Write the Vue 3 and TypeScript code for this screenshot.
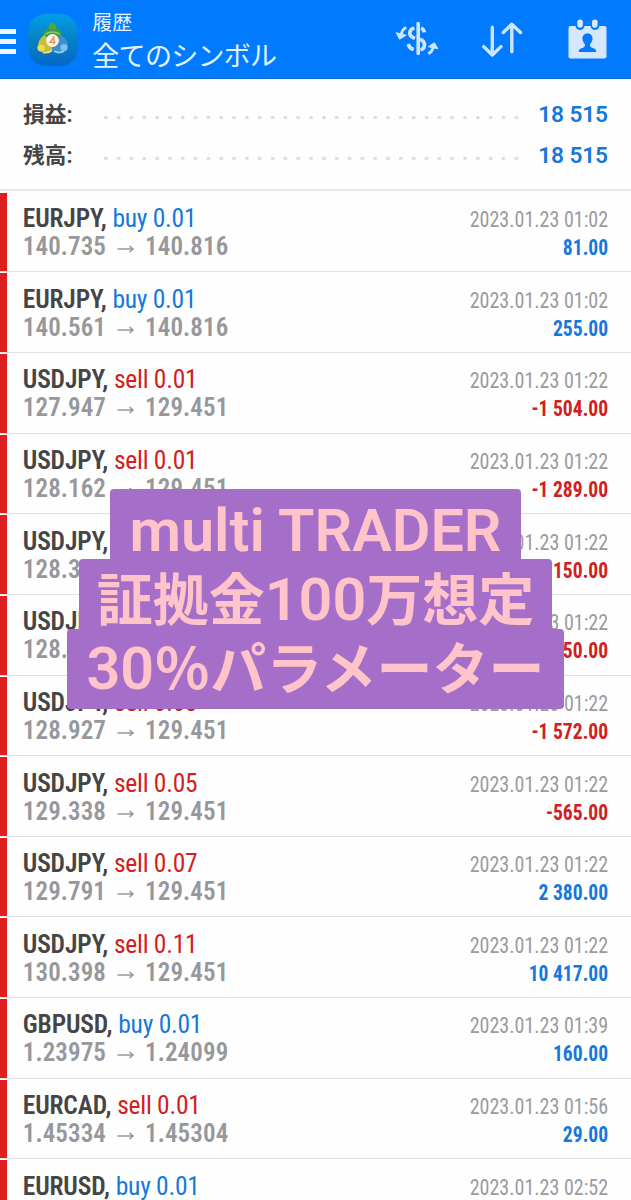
<script setup lang="ts">
interface Deal {
  symbol: string
  side: 'buy' | 'sell'
  volume: string
  open: string
  close: string
  time: string
  profit: string
}

const deal = (
  symbol: string, side: 'buy' | 'sell', volume: string,
  open: string, close: string, time: string, profit: string,
): Deal => ({ symbol, side, volume, open, close, time, profit })

const deals: Deal[] = [
  deal('EURJPY', 'buy', '0.01', '140.735', '140.816', '01:02', '81.00'),
  deal('EURJPY', 'buy', '0.01', '140.561', '140.816', '01:02', '255.00'),
  deal('USDJPY', 'sell', '0.01', '127.947', '129.451', '01:22', '-1 504.00'),
  deal('USDJPY', 'sell', '0.01', '128.162', '129.451', '01:22', '-1 289.00'),
  deal('USDJPY', 'sell', '0.01', '128.301', '129.451', '01:22', '-1 150.00'),
  deal('USDJPY', 'sell', '0.02', '128.626', '129.451', '01:22', '-1 650.00'),
  deal('USDJPY', 'sell', '0.03', '128.927', '129.451', '01:22', '-1 572.00'),
  deal('USDJPY', 'sell', '0.05', '129.338', '129.451', '01:22', '-565.00'),
  deal('USDJPY', 'sell', '0.07', '129.791', '129.451', '01:22', '2 380.00'),
  deal('USDJPY', 'sell', '0.11', '130.398', '129.451', '01:22', '10 417.00'),
  deal('GBPUSD', 'buy', '0.01', '1.23975', '1.24099', '01:39', '160.00'),
  deal('EURCAD', 'sell', '0.01', '1.45334', '1.45304', '01:56', '29.00'),
  deal('EURUSD', 'buy', '0.01', '1.08672', '1.08713', '02:52', '41.00'),
]

const totals = [
  { label: '損益:', value: '18 515' },
  { label: '残高:', value: '18 515' },
]

// Each banner line is a list of runs; CJK runs are set slightly smaller than Latin ones.
const banner = [
  [{ text: 'multi TRADER', cjk: false }],
  [{ text: '証拠金', cjk: true }, { text: '100', cjk: false }, { text: '万想定', cjk: true }],
  [{ text: '30', cjk: false }, { text: '％パラメーター', cjk: true }],
]
</script>

<template>
  <div class="screen">
    <header class="bar">
      <div class="menu"><i /><i /><i /></div>
      <svg class="logo" viewBox="0 0 50 52">
        <defs>
          <linearGradient id="tile" x1="0" y1="0" x2="0" y2="1">
            <stop offset="0" stop-color="#009fe8" />
            <stop offset=".5" stop-color="#0880c4" />
            <stop offset="1" stop-color="#0468c8" />
          </linearGradient>
        </defs>
        <rect width="50" height="52" rx="18" fill="url(#tile)" />
        <path d="M15 25c-1-6 3-12 9.500-12S35 19 34 25l-5 4h-9z" fill="#3f9a48" />
        <path d="M17.500 20q7-4 14 0" fill="none" stroke="#8ccb74" stroke-width="1.500" />
        <circle cx="24.500" cy="12.500" r="3.600" fill="#4fa83e" />
        <path d="M17 21c-4 2-7 6-7 11 0 4 3 7 8 7s7-3 7-6z" fill="#c9bd3c" />
        <circle cx="13" cy="34" r="3.600" fill="#ecdc58" />
        <path d="M15 38.500q5 1 9-2" fill="none" stroke="#f5e07a" stroke-width="1.600" />
        <path d="M32 21c5 2 8 6 8 11 0 4-3 7-8 7s-8-3-8-6z" fill="#3b8fcd" />
        <circle cx="36" cy="33.500" r="3.600" fill="#7cc2ec" />
        <path d="M26 37q5 3 10 0" fill="none" stroke="#8bcdf0" stroke-width="1.800" />
        <circle cx="24.500" cy="26.500" r="6.400" fill="#fbf3e6" />
        <path d="M25.800 30.500v-7.500l-3.800 5.200h5.500" fill="none" stroke="#e8935e" stroke-width="1.400" />
      </svg>
      <div class="heading">
        <div class="sub">履歴</div>
        <div class="main">全てのシンボル</div>
      </div>
      <svg class="actions" viewBox="0 0 251 79" fill="none" stroke="#cfe5ff" stroke-linecap="round" stroke-linejoin="round">
        <g stroke-width="3.600" stroke-linecap="butt">
          <path d="M39.200 23.500v30" stroke-width="3.600" stroke-linecap="round" />
          <path d="M35.500 28.200c-5.500.7-6.500 7-1.500 9.300l2 .9M42 28.300c1.800.6 3 1.900 3.500 4M29.300 44c.6 2.800 2.400 4.700 5.500 5.600M41 39.200c6.300 2.300 5.500 9.800.5 10.600" />
          <path d="M27.300 27.500c-3 1.200-4.600 3.500-4.800 7M49.300 53.800c3-1.700 4.600-4 5-7.300" stroke-width="2.800" />
          <path d="M17.200 32.700l10 2.500-6.700 4zM49.300 46.700l6.100-4 3.500 6z" fill="#cfe5ff" stroke-width="1" />
        </g>
        <g stroke-width="3.400">
          <path d="M113.300 27.200v27M104.700 46.600l8.600 8.400 8.700-8.400" />
          <path d="M132.800 51.800V24.200M124.300 32.500l8.500-8.300 8.700 8.300" />
        </g>
        <g stroke="none">
          <rect x="189.500" y="26" width="38" height="32.500" rx="2" fill="#d6e7fd" />
          <rect x="196.500" y="18" width="9" height="12" rx="4.500" fill="#007aff" />
          <rect x="211.500" y="18" width="9" height="12" rx="4.500" fill="#007aff" />
          <rect x="198.300" y="19.500" width="5.600" height="8.300" rx="2.800" fill="#d6e7fd" />
          <rect x="213" y="19.500" width="5.600" height="8.300" rx="2.800" fill="#d6e7fd" />
          <path d="M208.500 33.500c3.700 0 5.300 2.500 5 5.500-.2 2.300-1.300 4-2.500 5.200 0 2.800 1 3.300 3.500 4 2 .5 2.700 1.500 2.700 3.800h-17.400c0-2.300.7-3.300 2.700-3.800 2.500-.7 3.500-1.200 3.500-4-1.200-1.200-2.300-2.900-2.500-5.200-.3-3 1.300-5.500 5-5.500z" fill="#007aff" />
        </g>
      </svg>
    </header>

    <section class="totals">
      <div v-for="t in totals" :key="t.label" class="total">
        <span class="label">{{ t.label }}</span>
        <span class="dots" />
        <span class="sum">{{ t.value }}</span>
      </div>
    </section>

    <main class="deals">
      <article v-for="(d, i) in deals" :key="i" class="deal">
        <div class="left">
          <div class="title"><b>{{ d.symbol }},</b> <span :class="d.side">{{ d.side }} {{ d.volume }}</span></div>
          <div class="prices">
            <span>{{ d.open }}</span>
            <svg class="arrow" viewBox="0 0 18 10"><path d="M.5 5H16M12.500 2L16 5l-3.500 3" /></svg>
            <span>{{ d.close }}</span>
          </div>
        </div>
        <div class="right">
          <div class="time">2023.01.23 {{ d.time }}</div>
          <div class="profit" :class="{ loss: d.profit.startsWith('-') }">{{ d.profit }}</div>
        </div>
      </article>
    </main>

    <div class="banner">
      <div v-for="(line, i) in banner" :key="i" class="line" :class="'l' + (i + 1)">
        <span v-for="run in line" :key="run.text" :class="{ cjk: run.cjk }">{{ run.text }}</span>
      </div>
    </div>
  </div>
</template>

<style>
html, body { margin: 0; overflow: hidden; }
</style>

<style scoped>
.screen {
  position: relative;
  width: 631px;
  height: 1200px;
  overflow: hidden;
  background: #fefefe;
  font-family: Roboto, "Noto Sans CJK JP", sans-serif;
  white-space: nowrap;
}
.bar {
  box-sizing: border-box;
  display: flex;
  height: 79px;
  background: #007aff;
  border-bottom: 1px solid #0869d0;
  color: #e4f1ff;
}
.menu {
  display: flex;
  flex-direction: column;
  gap: 5.500px;
  width: 16.300px;
  padding-top: 29px;
}
.menu i { height: 4.600px; background: #eef5ff; }
.logo { width: 50px; height: 52px; margin: 14px 0 0 11.500px; }
.heading { width: 287px; margin-left: 14.500px; }
.sub { margin-top: 9px; font-size: 20px; line-height: 29px; }
.main { font-size: 27px; line-height: 38px; letter-spacing: -.7px; }
.actions { width: 251px; height: 79px; flex: none; }
.totals {
  box-sizing: border-box;
  height: 112px;
  padding: 14px 23px 0;
  border-bottom: 2px solid #e7e7e7;
}
.total { display: flex; align-items: center; height: 41px; }
.label { width: 79px; margin-top: -2px; font-size: 21.700px; font-weight: 700; color: #454545; }
.dots {
  width: 422px;
  height: 5px;
  margin-top: 8px;
  background: radial-gradient(circle at 3.800px 2.500px, #dedede 1.500px, transparent 2.200px) 0 0 / 12.840px 5px repeat-x;
}
.sum {
  flex: 1;
  margin-top: 1px;
  text-align: right;
  font-size: 22.700px;
  font-weight: 600;
  letter-spacing: -.1px;
  color: #1478dc;
}
.deals { padding-top: .8px; }
.deal {
  box-sizing: border-box;
  display: flex;
  height: 80.640px;
  padding-top: 1px;
  border-bottom: 1.500px solid #e0e0e0;
  font-stretch: 75%;
}
.deal::before {
  content: "";
  width: 6.600px;
  background: #dc2020;
}
.left { flex: 1; padding: 11.400px 0 0 16.200px; }
.title { height: 28px; line-height: 29px; font-size: 25.500px; color: #454545; }
.title b { font-weight: 600; letter-spacing: -.15px; }
.buy, .sell { letter-spacing: -.25px; }
.buy { color: #1478dc; }
.sell { color: #d02020; }
.prices { display: flex; align-items: center; height: 29px; font-size: 25px; font-weight: 600; letter-spacing: .1px; color: #96989b; }
.arrow { width: 18px; height: 10px; margin: 5px 10px 0 11px; }
.arrow path { fill: none; stroke: #96989b; stroke-width: 1.600; }
.right { padding: 10.400px 23px 0 0; text-align: right; transform: scaleX(.91); transform-origin: calc(100% - 23px) 0; }
.time { height: 29px; line-height: 33px; font-size: 22px; color: #999b9e; }
.profit { height: 28px; line-height: 31px; font-size: 21.500px; font-weight: 700; color: #1478dc; }
.profit.loss { color: #d02020; }
.banner {
  position: absolute;
  left: 67px;
  top: 489px;
  width: 497px;
  display: flex;
  flex-direction: column;
  align-items: center;
}
.line {
  display: flex;
  align-items: baseline;
  justify-content: center;
  background: #a56ec8;
  border-radius: 4px 4px 0 0;
  color: #ffc3ca;
  font-size: 59.300px;
  font-weight: 600;
}
.cjk { font-size: 56px; font-weight: 700; }
.l1 { width: 411px; height: 70px; line-height: 84px; }
.l2 { width: 473px; height: 70px; line-height: 81px; }
.l3 { width: 497px; height: 80px; line-height: 80px; border-radius: 4px; }
</style>
